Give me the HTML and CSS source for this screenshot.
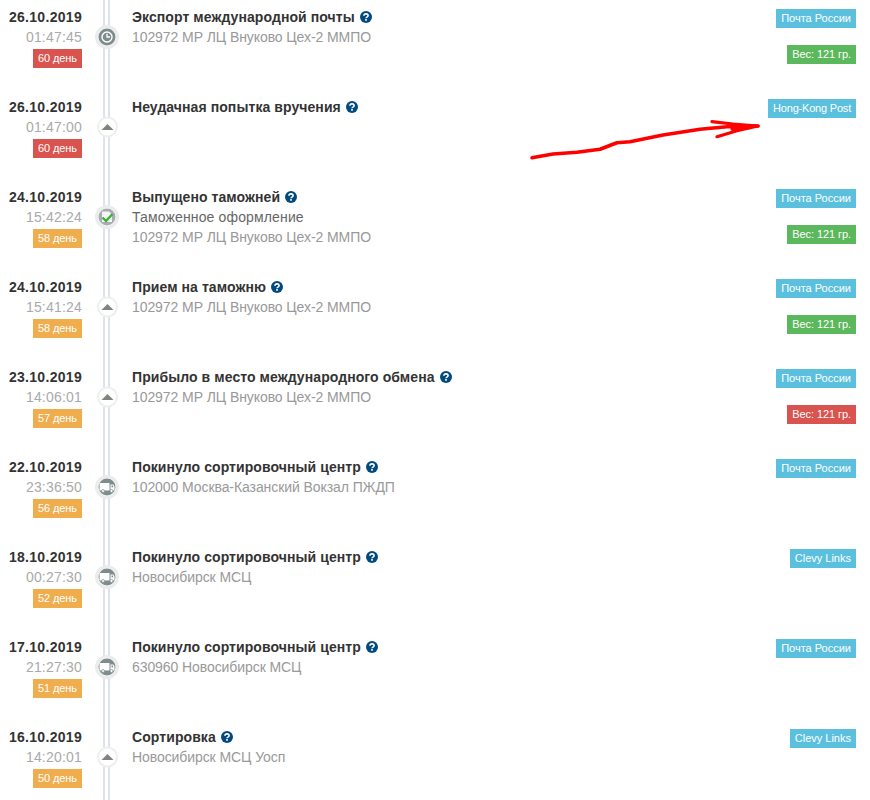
FILE: index.html
```html
<!DOCTYPE html>
<html lang="ru">
<head>
<meta charset="utf-8">
<title>Трекинг</title>
<link rel="stylesheet" href="styles.css">
</head>
<body>
<svg class="defs" width="0" height="0" aria-hidden="true">
  <symbol id="help" viewBox="0 0 12 12">
    <circle cx="6" cy="6" r="6" fill="#004a80"/>
    <path d="M3.900 4.700C4 3.500 4.900 2.900 6 2.900c1.200 0 2.100.7 2.100 1.700 0 1.500-2.100 1.500-2.100 2.700" fill="none" stroke="#fff" stroke-width="1.600"/>
    <rect x="5.100" y="8.100" width="1.800" height="1.600" fill="#fff"/>
  </symbol>
  <symbol id="i-clock" viewBox="0 0 24 24">
    <circle cx="12" cy="12" r="10.500" fill="#fff" stroke="#ececec" stroke-width="3"/>
    <circle cx="12" cy="12" r="8.500" fill="#7f8c8d"/>
    <circle cx="12" cy="12" r="5" fill="none" stroke="#fff" stroke-width="1.400"/>
    <path d="M12 8.800V12h3" fill="none" stroke="#fff" stroke-width="1.300"/>
  </symbol>
  <symbol id="i-up" viewBox="0 0 24 24">
    <circle cx="12.500" cy="12" r="9.500" fill="#fff" stroke="#efefef" stroke-width="2"/>
    <path d="M6.500 15l6-6 6 6z" fill="#7f8480"/>
  </symbol>
  <symbol id="i-check" viewBox="0 0 24 24">
    <circle cx="12" cy="12" r="10.500" fill="#fff" stroke="#ececec" stroke-width="3"/>
    <circle cx="12" cy="12" r="8.500" fill="#a9adb2"/>
    <path d="M7 6.500h7l3 3V17H7z" fill="#f4f4f4"/>
    <path d="M7.500 12.500l3.500 3.500 6.500-7" fill="none" stroke="#3fae3a" stroke-width="2.400"/>
  </symbol>
  <symbol id="i-truck" viewBox="0 0 24 24">
    <circle cx="12" cy="12" r="10.500" fill="#fff" stroke="#ececec" stroke-width="3"/>
    <circle cx="12" cy="12" r="8.500" fill="#7f8c8d"/>
    <path d="M4.500 8h10v7.500h-10zM15.500 9.500h3l1 2v4h-4z" fill="#fff"/>
    <rect x="16.500" y="10.500" width="1.600" height="1.800" fill="#7f8c8d"/>
    <circle cx="8" cy="16" r="1.500" fill="#fff" stroke="#7f8c8d" stroke-width=".7"/>
    <circle cx="16.500" cy="16" r="1.500" fill="#fff" stroke="#7f8c8d" stroke-width=".7"/>
  </symbol>
</svg>

<main class="timeline">

  <article class="event">
    <div class="when"><div class="date">26.10.2019</div><div class="time">01:47:45</div><span class="tag tag-red">60 день</span></div>
    <div class="rail"><svg class="node"><use href="#i-clock"/></svg></div>
    <div class="what"><h3 class="title">Экспорт международной почты <svg class="help"><use href="#help"/></svg></h3><p class="place">102972 МР ЛЦ Внуково Цех-2 ММПО</p></div>
    <div class="meta"><span class="tag tag-blue">Почта России</span><span class="tag tag-green">Вес: 121 гр.</span></div>
  </article>

  <article class="event">
    <div class="when"><div class="date">26.10.2019</div><div class="time">01:47:00</div><span class="tag tag-red">60 день</span></div>
    <div class="rail"><svg class="node"><use href="#i-up"/></svg></div>
    <div class="what"><h3 class="title">Неудачная попытка вручения <svg class="help"><use href="#help"/></svg></h3></div>
    <div class="meta"><span class="tag tag-blue tag-tight">Hong-Kong Post</span></div>
  </article>

  <article class="event">
    <div class="when"><div class="date">24.10.2019</div><div class="time">15:42:24</div><span class="tag tag-orange">58 день</span></div>
    <div class="rail"><svg class="node"><use href="#i-check"/></svg></div>
    <div class="what"><h3 class="title">Выпущено таможней <svg class="help"><use href="#help"/></svg></h3><p class="note">Таможенное оформление</p><p class="place">102972 МР ЛЦ Внуково Цех-2 ММПО</p></div>
    <div class="meta"><span class="tag tag-blue">Почта России</span><span class="tag tag-green">Вес: 121 гр.</span></div>
  </article>

  <article class="event">
    <div class="when"><div class="date">24.10.2019</div><div class="time">15:41:24</div><span class="tag tag-orange">58 день</span></div>
    <div class="rail"><svg class="node"><use href="#i-up"/></svg></div>
    <div class="what"><h3 class="title">Прием на таможню <svg class="help"><use href="#help"/></svg></h3><p class="place">102972 МР ЛЦ Внуково Цех-2 ММПО</p></div>
    <div class="meta"><span class="tag tag-blue">Почта России</span><span class="tag tag-green">Вес: 121 гр.</span></div>
  </article>

  <article class="event">
    <div class="when"><div class="date">23.10.2019</div><div class="time">14:06:01</div><span class="tag tag-orange">57 день</span></div>
    <div class="rail"><svg class="node"><use href="#i-up"/></svg></div>
    <div class="what"><h3 class="title">Прибыло в место международного обмена <svg class="help"><use href="#help"/></svg></h3><p class="place">102972 МР ЛЦ Внуково Цех-2 ММПО</p></div>
    <div class="meta"><span class="tag tag-blue">Почта России</span><span class="tag tag-red">Вес: 121 гр.</span></div>
  </article>

  <article class="event">
    <div class="when"><div class="date">22.10.2019</div><div class="time">23:36:50</div><span class="tag tag-orange">56 день</span></div>
    <div class="rail"><svg class="node"><use href="#i-truck"/></svg></div>
    <div class="what"><h3 class="title">Покинуло сортировочный центр <svg class="help"><use href="#help"/></svg></h3><p class="place">102000 Москва-Казанский Вокзал ПЖДП</p></div>
    <div class="meta"><span class="tag tag-blue">Почта России</span></div>
  </article>

  <article class="event">
    <div class="when"><div class="date">18.10.2019</div><div class="time">00:27:30</div><span class="tag tag-orange">52 день</span></div>
    <div class="rail"><svg class="node"><use href="#i-truck"/></svg></div>
    <div class="what"><h3 class="title">Покинуло сортировочный центр <svg class="help"><use href="#help"/></svg></h3><p class="place">Новосибирск МСЦ</p></div>
    <div class="meta"><span class="tag tag-blue">Clevy Links</span></div>
  </article>

  <article class="event">
    <div class="when"><div class="date">17.10.2019</div><div class="time">21:27:30</div><span class="tag tag-orange">51 день</span></div>
    <div class="rail"><svg class="node"><use href="#i-truck"/></svg></div>
    <div class="what"><h3 class="title">Покинуло сортировочный центр <svg class="help"><use href="#help"/></svg></h3><p class="place">630960 Новосибирск МСЦ</p></div>
    <div class="meta"><span class="tag tag-blue">Почта России</span></div>
  </article>

  <article class="event">
    <div class="when"><div class="date">16.10.2019</div><div class="time">14:20:01</div><span class="tag tag-orange">50 день</span></div>
    <div class="rail"><svg class="node"><use href="#i-up"/></svg></div>
    <div class="what"><h3 class="title">Сортировка <svg class="help"><use href="#help"/></svg></h3><p class="place">Новосибирск МСЦ Уосп</p></div>
    <div class="meta"><span class="tag tag-blue">Clevy Links</span></div>
  </article>

</main>

<svg class="arrow" width="870" height="170" viewBox="0 0 870 170" aria-hidden="true">
  <path d="M532 157.700L553 154 577 152.300 600 149.300 617 142.700 630 141.700 663 135 700 129.300 727 126.700 758 126" fill="none" stroke="#f00" stroke-width="3.600" stroke-linecap="round" stroke-linejoin="round"/>
  <path d="M712 121.700L733 124 758 126 737 130.700 717 136.700M730 125L756 126 732 129" fill="none" stroke="#f00" stroke-width="3.200" stroke-linecap="round" stroke-linejoin="round"/>
</svg>
</body>
</html>
```

FILE: styles.css
```css
* { box-sizing: border-box; }
html, body { margin: 0; padding: 0; }
body {
  position: relative;
  height: 800px;
  overflow: hidden;
  background: #fff;
  font-family: "Liberation Sans", Arial, sans-serif;
  font-size: 14px;
  color: #333;
}
.defs { position: absolute; }
.timeline { display: flex; flex-direction: column; padding-right: 14px; }
.event {
  display: grid;
  grid-template-columns: 82px 50px 1fr auto;
  height: 90px;
  flex: none;
  align-items: start;
}
.when { display: flex; flex-direction: column; align-items: flex-end; padding-top: 7px; }
.date { font-weight: 700; line-height: 20px; letter-spacing: .3px; }
.time { line-height: 20px; color: #aaa; letter-spacing: .2px; }
.rail {
  height: 90px;
  display: flex;
  justify-content: flex-start;
  padding: 25px 0 0 13px;
  background: linear-gradient(#dde3e8, #dde3e8) 21px 0 / 2px 100% no-repeat,
              linear-gradient(#dde3e8, #dde3e8) 26px 0 / 2px 100% no-repeat;
}
.node { width: 24px; height: 24px; display: block; }
.what { padding-top: 7px; min-width: 0; }
.title { margin: 0; font-size: 14px; font-weight: 700; line-height: 20px; letter-spacing: .08px; color: #333; }
.help { width: 12px; height: 12px; vertical-align: -1px; margin-left: 1px; }
.note, .place { margin: 0; line-height: 20px; }
.note { color: #666; letter-spacing: .14px; }
.place { color: #999; letter-spacing: -.08px; }
.meta { display: flex; flex-direction: column; align-items: flex-end; gap: 17px; padding-top: 9px; }
.tag {
  display: block;
  height: 19px;
  padding: 0 5px;
  font-size: 11px;
  line-height: 19px;
  letter-spacing: -.08px;
  color: #fff;
  white-space: nowrap;
}
.when .tag { margin-top: 2px; }
.tag-red { background: #d9534f; }
.tag-orange { background: #f0ad4e; }
.tag-blue { background: #5bc0de; letter-spacing: 0; }
.tag-tight { letter-spacing: -.2px; }
.tag-green { background: #5cb85c; }
.arrow { position: absolute; left: 0; top: 0; pointer-events: none; }
```
